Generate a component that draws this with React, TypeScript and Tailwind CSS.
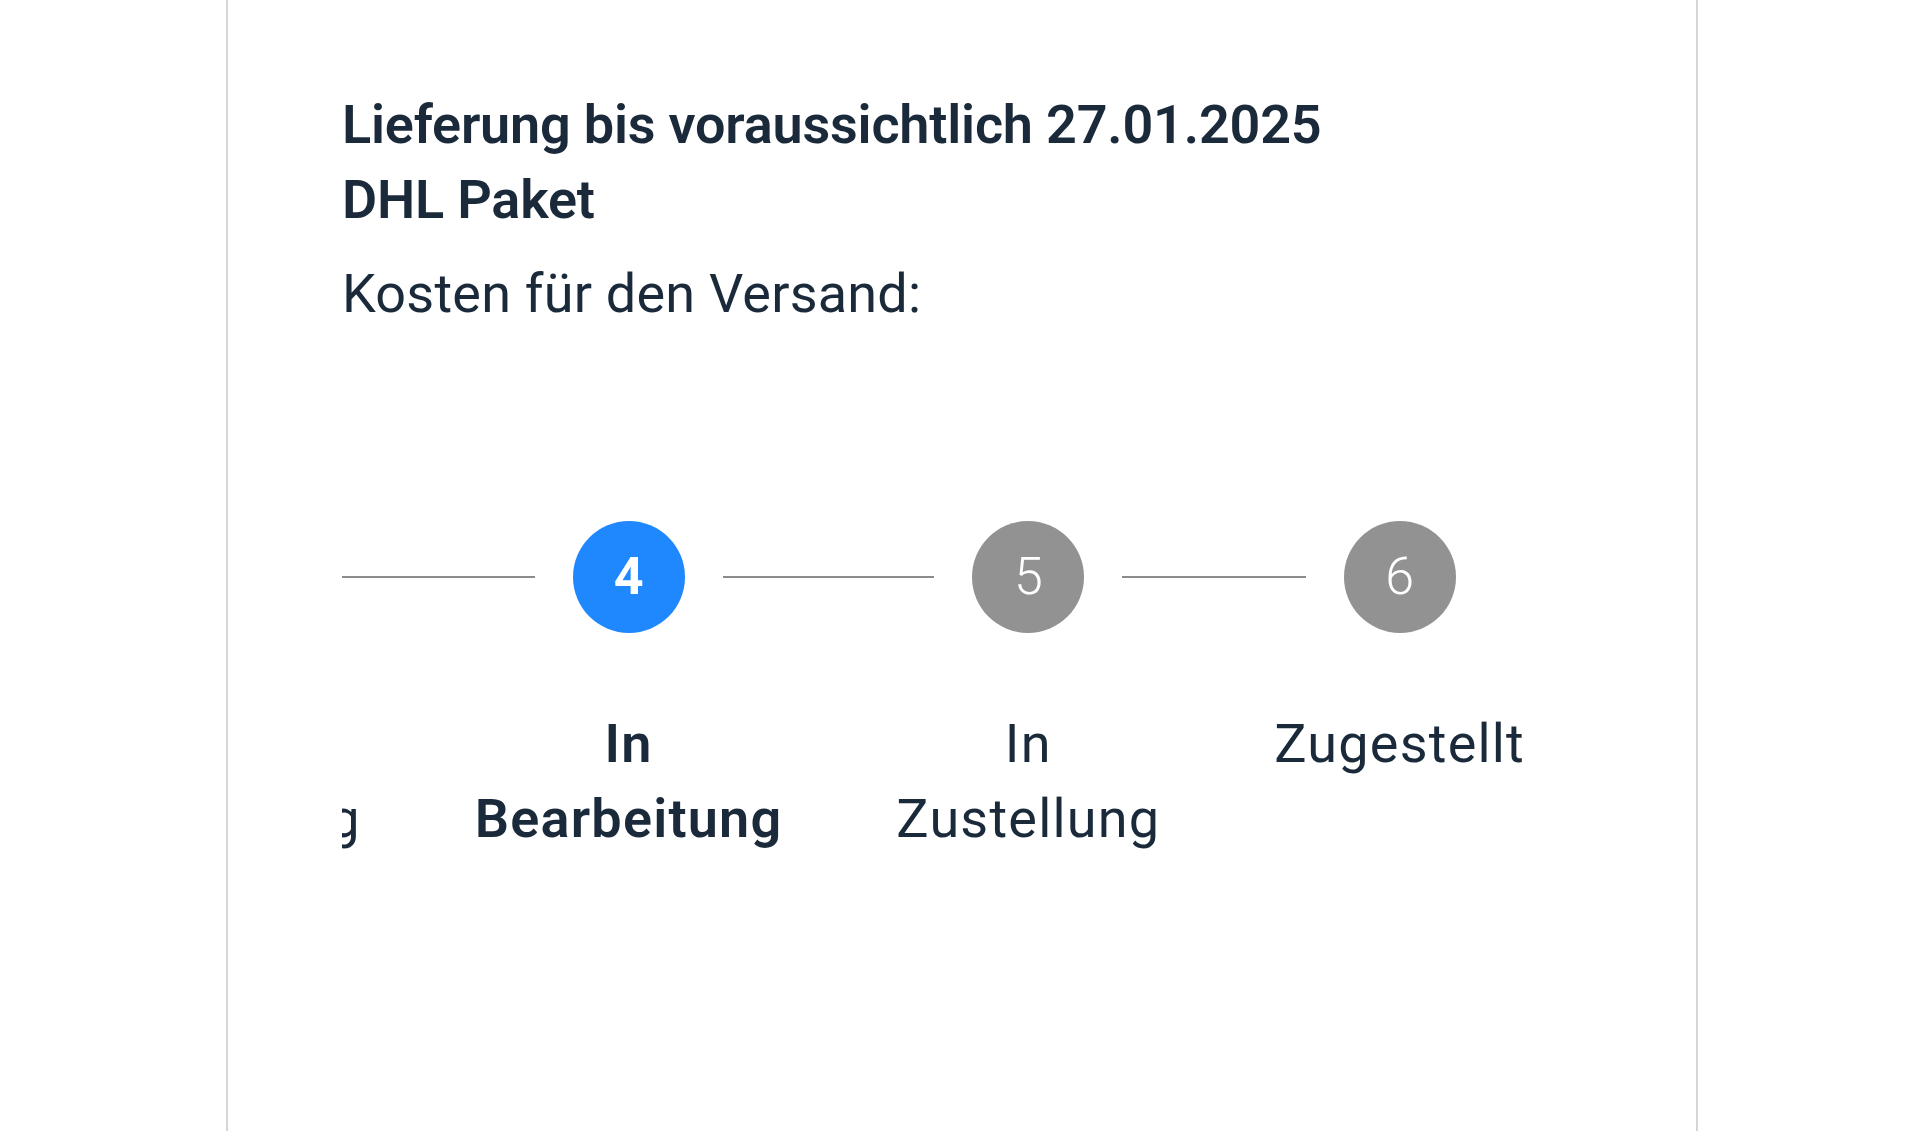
import React from "react"

interface Step {
  num: number
  lines: string[]
  state: "done" | "active" | "todo"
}

const steps: Step[] = [
  { num: 1, lines: ["Bestellt"], state: "done" },
  { num: 2, lines: ["Zahlung", "erhalten"], state: "done" },
  { num: 3, lines: ["In", "Vorbereitung"], state: "done" },
  { num: 4, lines: ["In", "Bearbeitung"], state: "active" },
  { num: 5, lines: ["In", "Zustellung"], state: "todo" },
  { num: 6, lines: ["Zugestellt"], state: "todo" },
]

function StepItem({ step, first, last }: { step: Step; first: boolean; last: boolean }) {
  const isActive = step.state === "active"
  return (
    <div className="flex shrink-0 flex-col items-stretch">
      {/* circle row, connector halves run to the column edges */}
      <div className="flex h-[112px] items-center">
        <div className={"mr-[38px] h-[2px] flex-1 " + (first ? "bg-transparent" : "bg-[#8c8c8c]")} />
        <div
          className={
            "flex h-[112px] w-[112px] shrink-0 items-center justify-center rounded-full text-[52px] text-white " +
            (isActive ? "bg-[#1f88ff] font-bold" : "bg-[#929292] font-light")
          }
        >
          {step.num}
        </div>
        <div className={"ml-[38px] h-[2px] flex-1 " + (last ? "bg-transparent" : "bg-[#8c8c8c]")} />
      </div>
      <div
        className={
          "mt-[73px] px-[57px] text-center text-[54px] leading-[75px] tracking-[1.2px] text-[#1b2a3a] " +
          (isActive ? "font-semibold" : "font-normal")
        }
      >
        {step.lines.map((l, i) => (
          <div key={i} className="whitespace-nowrap">
            {l}
          </div>
        ))}
      </div>
    </div>
  )
}

export default function App() {
  return (
    <div
      className="flex h-[1131px] w-[1920px] justify-start overflow-hidden bg-white"
      style={{ fontFamily: "Roboto, 'Noto Sans', Arial, sans-serif" }}
    >
      <div className="ml-[226px] h-full w-[1472px] border-x-2 border-[#d6d6d6] px-[114px] pt-[87px]">
        <div className="text-[54px] font-semibold leading-[75px] tracking-[-0.2px] text-[#1b2a3a]">
          <div>Lieferung bis voraussichtlich 27.01.2025</div>
          <div>DHL Paket</div>
        </div>
        <div className="mt-[19px] text-[54px] leading-[75px] tracking-[0.2px] text-[#1b2a3a]">Kosten für den Versand:</div>

        {/* scrolled stepper: pinned to the end, earlier steps clipped on the left */}
        <div className="mt-[190px] flex justify-end overflow-hidden">
          {steps.map((s, i) => (
            <StepItem key={s.num} step={s} first={i === 0} last={i === steps.length - 1} />
          ))}
        </div>
      </div>
    </div>
  )
}
